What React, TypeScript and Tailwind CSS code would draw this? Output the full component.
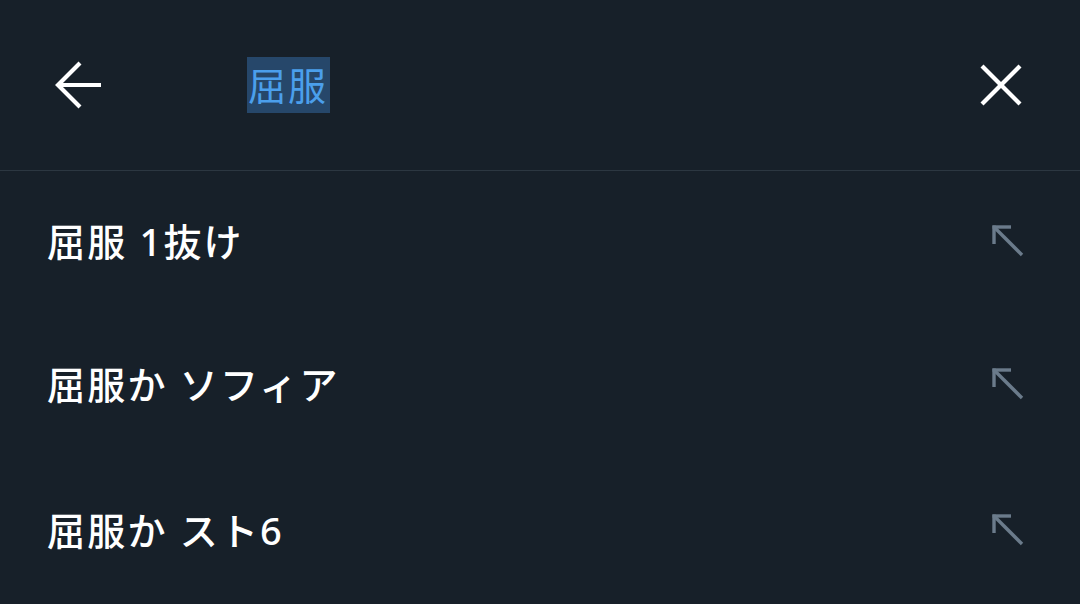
const suggestions = ['屈服 1抜け', '屈服か ソフィア', '屈服か スト6']

function BackArrow() {
  return (
    <svg width="48" height="48" viewBox="0 0 48 48" fill="none" stroke="white" strokeWidth="4.2">
      <path d="M3 24 H46" />
      <path d="M25 2 L3 24 L25 46" strokeLinejoin="miter" />
    </svg>
  )
}

function CloseIcon() {
  return (
    <svg width="44" height="44" viewBox="0 0 44 44" fill="none" stroke="white" strokeWidth="4.2">
      <path d="M3 3 L41 41" />
      <path d="M41 3 L3 41" />
    </svg>
  )
}

function ArrowUpLeft() {
  return (
    <svg width="34" height="34" viewBox="0 0 34 34" fill="none" stroke="#6b7b8b" strokeWidth="3.4">
      <path d="M3 3 L31 31" />
      <path d="M1.5 3 H20" />
      <path d="M3 1.5 V20" />
    </svg>
  )
}

export default function App() {
  return (
    <div
      className="w-[1080px] h-[604px] bg-[#172029] text-white overflow-hidden"
      style={{ fontFamily: '"Noto Sans", "Noto Sans CJK JP", sans-serif' }}
    >
      {/* Header */}
      <div className="h-[171px] flex items-center border-b border-[#2c3741] pl-[55px] pr-[57px]">
        <BackArrow />
        <div className="ml-[144px] flex-1 flex items-center">
          <span className="bg-[#26476a] text-[#4b9fec] text-[38px] leading-[56px] tracking-[2px] pl-[1px] pr-[2px]">
            屈服
          </span>
        </div>
        <CloseIcon />
      </div>

      {/* Suggestions */}
      <div className="flex flex-col">
        {suggestions.map((s, i) => (
          <div
            key={s}
            className={`flex items-center justify-between pl-[47px] pr-[55px] ${i === 0 ? 'h-[140px]' : 'h-[146px]'}`}
          >
            <span className="text-[38px] font-medium tracking-[2.2px]">{s}</span>
            <ArrowUpLeft />
          </div>
        ))}
      </div>
    </div>
  )
}
